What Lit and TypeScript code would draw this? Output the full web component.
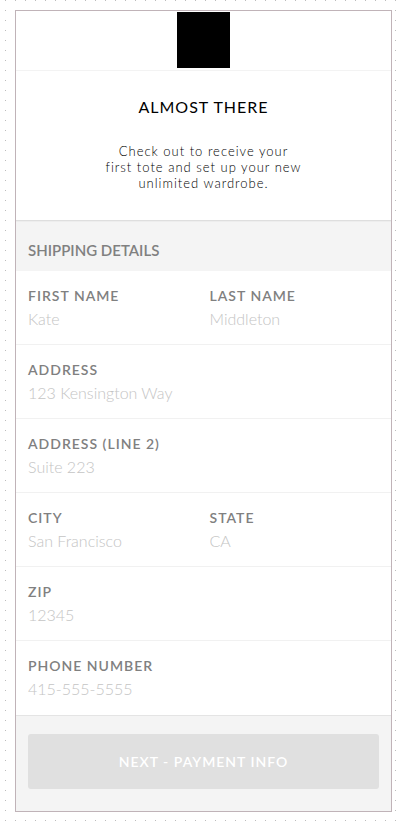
import { LitElement, html, css } from "lit";
import { customElement } from "lit/decorators.js";

interface Field {
  id: string;
  label: string;
  placeholder: string;
}

const ROWS: Field[][] = [
  [
    { id: "first-name", label: "FIRST NAME", placeholder: "Kate" },
    { id: "last-name", label: "LAST NAME", placeholder: "Middleton" },
  ],
  [{ id: "address", label: "ADDRESS", placeholder: "123 Kensington Way" }],
  [{ id: "address-2", label: "ADDRESS (LINE 2)", placeholder: "Suite 223" }],
  [
    { id: "city", label: "CITY", placeholder: "San Francisco" },
    { id: "state", label: "STATE", placeholder: "CA" },
  ],
  [{ id: "zip", label: "ZIP", placeholder: "12345" }],
  [{ id: "phone", label: "PHONE NUMBER", placeholder: "415-555-5555" }],
];

@customElement("app-root")
export class AppRoot extends LitElement {
  static styles = css`
    :host {
      display: block;
      box-sizing: border-box;
      min-height: 100vh;
      padding: 10px 12px 9px 15px;
      font-family: Lato, "Open Sans", sans-serif;
      /* one grey pixel every 10px */
      background: #fff conic-gradient(at 1px 1px, #fff 75%, #bcbcbc 0) 5px 0 / 10px 10px;
    }
    .card {
      border: 1px solid #c0b3b8;
      background: #fff;
    }
    .brand {
      display: flex;
      justify-content: center;
      padding: 1px 0 2px;
      border-bottom: 1px solid #f3f3f3;
    }
    .logo {
      width: 53px;
      height: 56px;
      background: #000;
    }
    .intro {
      padding: 26px 12px 29px;
      border-bottom: 1px solid #dedede;
      text-align: center;
      color: #000;
    }
    .title {
      margin: 0 0 26px;
      font-size: 16px;
      line-height: 20px;
      font-weight: 400;
      letter-spacing: 1px;
    }
    .lead {
      max-width: 210px;
      margin: 0 auto;
      font-size: 13px;
      line-height: 16px;
      font-weight: 300;
      letter-spacing: 1px;
    }
    .section {
      margin: 0;
      padding: 19px 12px 11px;
      border-top: 1px solid #ededed;
      background: #f4f4f4;
      color: #808080;
      font-size: 15px;
      line-height: 19px;
      font-weight: 600;
    }
    .row {
      display: grid;
      grid-template-columns: 1fr 1fr;
      column-gap: 12px;
      padding: 15px 12px 14px;
      border-bottom: 1px solid #f1f1f1;
    }
    .row:last-of-type {
      padding-bottom: 15px;
      border-bottom-color: #e4e4e4;
    }
    .field {
      display: flex;
      flex-direction: column;
      gap: 2px;
      min-width: 0;
    }
    .wide {
      grid-column: 1 / -1;
    }
    .label {
      color: #808080;
      font-size: 14px;
      line-height: 20px;
      font-weight: 600;
      letter-spacing: 1px;
    }
    .input {
      width: 100%;
      height: 22px;
      padding: 0;
      border: 0;
      outline: 0;
      background: none;
      color: #808080;
      font: 300 16px/22px Lato, "Open Sans", sans-serif;
    }
    .input::placeholder {
      color: #c4c4c4;
      opacity: 1;
    }
    .footer {
      padding: 18px 12px 22px;
      background: #f4f4f4;
    }
    .next {
      display: block;
      width: 100%;
      height: 55px;
      padding: 0;
      border: 0;
      border-radius: 3px;
      background: #e0e0e0;
      color: #fff;
      font: 600 14px/20px Lato, "Open Sans", sans-serif;
      letter-spacing: 1px;
    }
  `;

  private field(f: Field, wide: boolean) {
    return html`<div class="field ${wide ? "wide" : ""}">
      <label class="label" for=${f.id}>${f.label}</label>
      <input class="input" id=${f.id} type="text" placeholder=${f.placeholder} />
    </div>`;
  }

  render() {
    return html`
      <main class="card">
        <header class="brand"><div class="logo"></div></header>
        <section class="intro">
          <h1 class="title">ALMOST THERE</h1>
          <p class="lead">
            Check out to receive your<br />first tote and set up your new<br />unlimited wardrobe.
          </p>
        </section>
        <form>
          <h2 class="section">SHIPPING DETAILS</h2>
          ${ROWS.map(
            (row) => html`<div class="row">${row.map((f) => this.field(f, row.length === 1))}</div>`
          )}
          <footer class="footer">
            <button class="next" type="button">NEXT - PAYMENT INFO</button>
          </footer>
        </form>
      </main>
    `;
  }
}
